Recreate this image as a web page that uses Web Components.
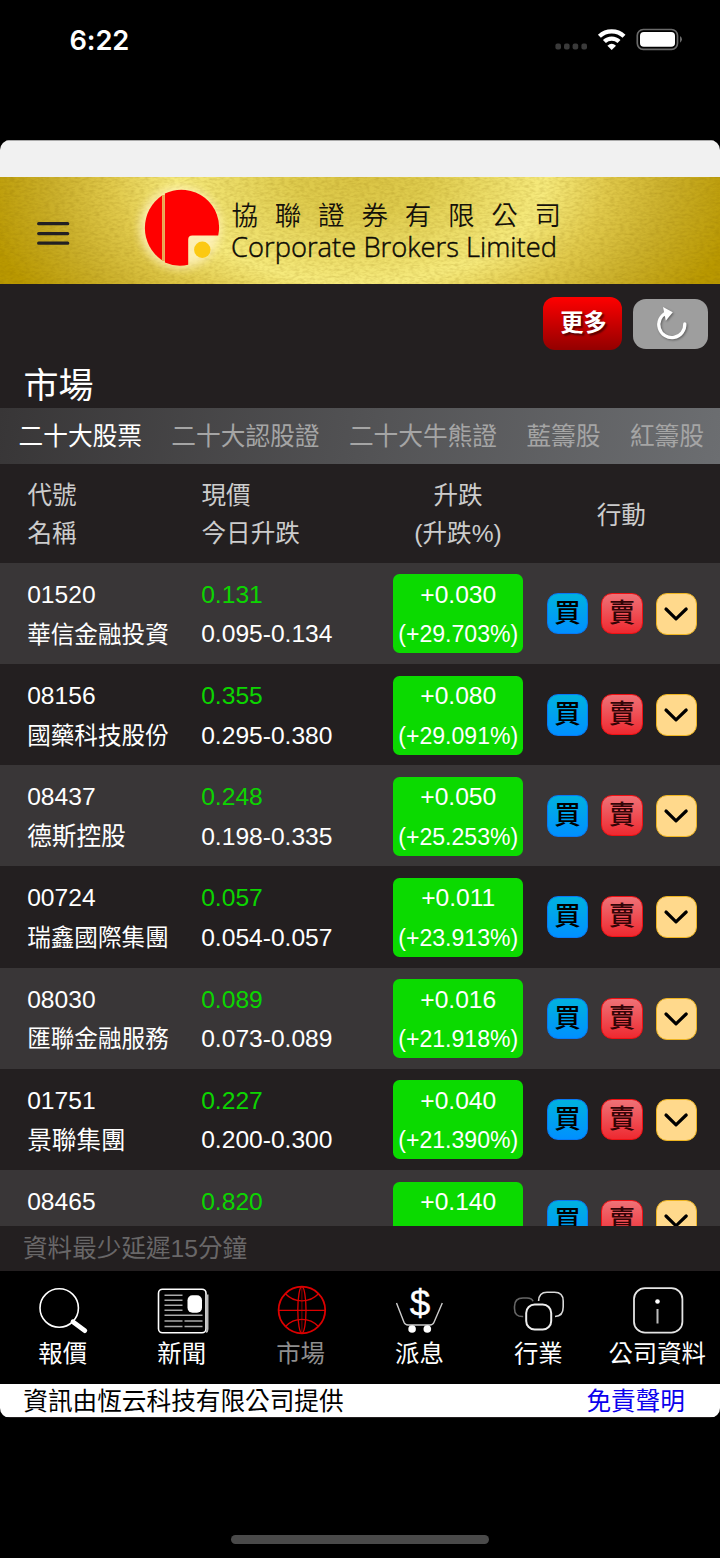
<!DOCTYPE html>
<html lang="zh-Hant">
<head>
<meta charset="utf-8">
<title>市場</title>
<style>
html,body{margin:0;background:#000}
body{width:720px;height:1558px;overflow:hidden;font-family:"Liberation Sans","Noto Sans CJK TC",sans-serif;color:#fff}
</style>
</head>
<body>
<market-app></market-app>
<script>
const define=(name,html)=>customElements.define(name,class extends HTMLElement{
  constructor(){
    super();
    const t=document.createElement('template');
    t.innerHTML=html;
    this.attachShadow({mode:'open'}).append(t.content.cloneNode(true));
  }
});

define('status-bar',`<style>
:host{display:flex;height:140px;box-sizing:border-box;padding:24px 37px 0 69.5px;justify-content:space-between;align-items:flex-start}
.time{font:600 27.3px/34px Inter,sans-serif;letter-spacing:-.1px}
svg{display:block}
</style><span class="time">6:22</span>
<svg width="130" height="32" viewBox="553 24 130 32">
<g fill="#3a3a3a"><rect x="555.4" y="43.4" width="5.6" height="6" rx="2"/><rect x="564" y="43.4" width="5.6" height="6" rx="2"/><rect x="572.6" y="43.4" width="5.6" height="6" rx="2"/><rect x="581.4" y="43.4" width="5.6" height="6" rx="2"/></g>
<g fill="none" stroke="#fff" stroke-width="4.3"><path d="M599.4 36.2A18 18 0 0 1 624 36.2"/><path d="M604.4 41.5A10.6 10.6 0 0 1 619 41.5"/></g>
<path d="M611.7 49.9L607.4 45.7Q611.7 41.8 616 45.7Z" fill="#fff"/>
<rect x="637.3" y="29.5" width="40.2" height="19.8" rx="6" fill="none" stroke="#6a6a6a" stroke-width="1.7"/>
<rect x="640" y="32.1" width="35" height="14.7" rx="3.8" fill="#fff"/>
<path d="M680 36Q682 37.5 682 39.3Q682 41.2 680 42.8Z" fill="#6a6a6a"/>
</svg>`);

define('brand-header',`<style>
:host{display:block;height:107px;background:radial-gradient(ellipse 385px 222px at 50% 0,#dac444 0,#dfcc4e 18%,#f6ea7c 48%,#e1ca4c 64%,#cbb02b 80%,#b99800 100%)}
svg{display:block}
</style>
<svg width="720" height="107" viewBox="0 177 720 107">
<defs>
<filter id="grain" x="0" y="0" width="100%" height="100%" color-interpolation-filters="sRGB"><feTurbulence type="fractalNoise" baseFrequency=".2 .42" numOctaves="2" seed="4"/><feColorMatrix values="0 0 0 0 .5  0 0 0 0 .38  0 0 0 0 0  1.3 0 0 0 -.5"/></filter>
<filter id="glow" x="-30%" y="-30%" width="160%" height="160%"><feGaussianBlur stdDeviation="5"/></filter>
</defs>
<rect y="177" width="720" height="107" filter="url(#grain)" opacity=".3"/>
<path d="M38.7 223.7H67.7M38.7 233.6H67.7M38.7 243.2H67.7" stroke="#222022" stroke-width="3.3" stroke-linecap="round"/>
<circle cx="180" cy="228" r="40.5" fill="#fff3c0" opacity=".85" filter="url(#glow)"/>
<g transform="translate(-1 0)"><path d="M165.9 193.6A37.6 37.6 0 0 1 219.2 235.5H193.3Q189.2 235.5 189.2 239.6V264.8A37.6 37.6 0 0 1 165.9 262.5Z" fill="#f00"/>
<path d="M163 195.5V260.3A39.2 39.2 0 0 1 163 195.5Z" fill="#f00"/>
<rect x="163.1" y="195" width="2.7" height="66" fill="#e9a44f"/>
<circle cx="203.3" cy="249.7" r="8.2" fill="#fcc912"/></g>
<text x="231.5" y="225" font-family="Noto Sans CJK TC,sans-serif" font-weight="350" font-size="26.5" letter-spacing="16.8" fill="#15110a">協聯證券有限公司</text>
<text x="231" y="257" font-family="Open Sans,sans-serif" font-weight="300" font-size="27.3" textLength="326" fill="#0d0b05" stroke="#0d0b05" stroke-width=".45">Corporate Brokers Limited</text>
</svg>`);

define('tool-bar',`<style>
:host{display:flex;flex-direction:column;height:124px}
.acts{display:flex;justify-content:flex-end;gap:11px;padding:13px 12px 0 0;height:53px}
.more{width:79px;height:53px;border-radius:12px;background:linear-gradient(#f00,#930000);font:700 23.3px/48px "Noto Sans CJK TC",sans-serif;text-align:center;text-indent:2px;text-shadow:2px 2px 2px #0008}
.re{width:75px;height:50px;margin-top:1.5px;border-radius:13px;background:#9e9e9e}
h1{margin:9px 0 0 23.5px;font:400 35px/48px "Noto Sans CJK TC",sans-serif}
</style><div class="acts"><div class="more">更多</div><div class="re"><svg width="75" height="50" viewBox="633 298.5 75 50"><g style="filter:drop-shadow(1.5px 1.5px 1px #0006)"><path d="M666.6 312.2A13 13 0 1 0 684.8 323.4" fill="none" stroke="#fff" stroke-width="3.3" stroke-linecap="round"/><path d="M663 306.6L672.8 311.8L665.8 320.2Z" fill="#fff"/></g></svg></div></div>
<h1>市場</h1>`);

define('tab-strip',`<style>
:host{display:flex;height:56px;padding-left:18.5px;gap:29.4px;background:linear-gradient(100deg,#383637,#6c6e71);white-space:nowrap;color:#a5a5a5;font-size:24.7px;line-height:58.5px;box-sizing:border-box;overflow:hidden}
.on{color:#fff}
</style><span class="on">二十大股票</span><span>二十大認股證</span><span>二十大牛熊證</span><span>藍籌股</span><span>紅籌股</span>`);

define('column-heads',`<style>
:host{display:grid;grid-template-columns:174px 192px 129px 1fr;height:98.8px;box-sizing:border-box;padding:12.6px 0 0 27.5px;color:#ccc;font-size:24.6px;line-height:38.5px}
.c{text-align:center}.a{line-height:77px}
</style><div>代號<br>名稱</div><div>現價<br>今日升跌</div><div class="c">升跌<br>(升跌%)</div><div class="c a">行動</div>`);

define('trade-actions',`<style>
:host{display:flex;gap:13px;padding-top:29.9px}
b{display:block;box-sizing:border-box;width:41.6px;height:41.6px;border-radius:11px;font:500 26.5px/34.6px "Noto Sans CJK TC",sans-serif;text-align:center;color:#000}
.buy{background:linear-gradient(#00b2de,#0090ff);border:1.5px solid #0878f4}
.sell{height:41px;background:linear-gradient(#ef7277,#ee2930);border:1.5px solid #ee1013;color:#320406}
.down{height:42px;background:#ffd98c;border:1.5px solid #eeb421}
svg{display:block}
</style><b class="buy">買</b><b class="sell">賣</b><b class="down"><svg width="38" height="38"><path d="M9 15L19 24.8L29.2 15" fill="none" stroke="#000" stroke-width="3.2" stroke-linecap="round" stroke-linejoin="round"/></svg></b>`);

define('stock-row',`<style>
:host{display:grid;grid-template-columns:174px 192.3px 129.5px auto;height:101.22px;box-sizing:border-box;padding-left:27.2px;font-size:24.6px;line-height:39.6px}
:host(:nth-child(odd)){background:#393637}
.t{padding-top:12px}
.p{color:#0cd500}
.n{font-size:23.6px;padding-top:1.2px}
:host([short]) .n{font-size:24.6px;padding-top:.4px}
.chg{margin-top:11.6px;height:79px;border-radius:6.5px;background:#0bda00;text-align:center;box-sizing:border-box;padding-top:.4px;white-space:nowrap}
.chg span{font-size:23.1px}
trade-actions{margin-left:23.6px}
</style><div class="t"><slot name="code"></slot><div class="n"><slot name="name"></slot></div></div>
<div class="t"><div class="p"><slot name="price"></slot></div><slot name="range"></slot></div>
<div class="chg"><slot name="change"></slot><br><span><slot name="percent"></slot></span></div><trade-actions></trade-actions>`);

const stocks=[
['01520','華信金融投資','0.131','0.095-0.134','+0.030','(+29.703%)'],
['08156','國藥科技股份','0.355','0.295-0.380','+0.080','(+29.091%)'],
['08437','德斯控股','0.248','0.198-0.335','+0.050','(+25.253%)'],
['00724','瑞鑫國際集團','0.057','0.054-0.057','+0.011','(+23.913%)'],
['08030','匯聯金融服務','0.089','0.073-0.089','+0.016','(+21.918%)'],
['01751','景聯集團','0.227','0.200-0.300','+0.040','(+21.390%)'],
['08465','','0.820','','+0.140','']];
const keys=['code','name','price','range','change','percent'];
define('stock-list',`<style>:host{display:block;height:663.2px;overflow:hidden}</style><div>`+
stocks.map(s=>`<stock-row${s[1].length<6?' short':''}>${s.map((v,i)=>v?`<span slot="${keys[i]}">${v}</span>`:'').join('')}</stock-row>`).join('')+'</div>');

define('nav-item',`<style>
:host{display:flex;flex-direction:column;align-items:center;font-size:24.4px;line-height:32px;white-space:nowrap}
:host([on]) .l{color:#8e8e8e}
</style><slot name="icon"></slot><span class="l"><slot></slot></span>`);

define('bottom-nav',`<style>
:host{display:grid;grid-template-columns:repeat(6,118.9px);height:112.5px;background:#000;padding:9px 0 0 3.3px;box-sizing:border-box}
svg{display:block;fill:none;stroke:#fff;stroke-width:1.6}
</style>
<nav-item><svg slot="icon" width="60" height="58" viewBox="33 1280 60 58"><circle cx="59.2" cy="1308" r="19.2"/><path d="M73 1321.8L84.8 1330.6" stroke-width="4.8" stroke-linecap="round"/></svg>報價</nav-item>
<nav-item><svg slot="icon" width="60" height="58" viewBox="151.5 1280 60 58"><rect x="158" y="1289.2" width="47.5" height="43.6" rx="4"/><path d="M207 1294.5V1329Q207 1331.5 205.5 1332" stroke="#bbb" stroke-width="2"/><path d="M164 1295.3H182M164 1300.3H182M164 1305.3H182M164 1310.3H182M164 1315.3H202M164 1321H182M184 1321H202M164 1326.5H182M184 1326.5H202" stroke="#aaa"/><rect x="187" y="1295.2" width="14.5" height="17.6" rx="5" fill="#fff" stroke="none"/></svg>新聞</nav-item>
<nav-item on><svg slot="icon" width="60" height="58" viewBox="270.5 1280 60 58" style="stroke:#dc0000;stroke-width:1.3"><circle cx="301.4" cy="1310" r="23.3" stroke-width="1.8"/><ellipse cx="301.4" cy="1310" rx="4.1" ry="23.3"/><path d="M301.4 1287V1333" stroke-width=".6"/><path d="M278 1310.3H325M285 1293.7Q291.5 1300.8 301.4 1300.8T318 1293.7M285 1326.5Q291.5 1319.3 301.4 1319.3T318 1326.5"/></svg>市場</nav-item>
<nav-item><svg slot="icon" width="60" height="58" viewBox="389.5 1280 60 58"><path d="M397 1303L404.6 1322.6Q405.6 1325 408.5 1325H430.5Q433.4 1325 434.4 1322.6L442.8 1303" stroke="#ccc" stroke-width="1.4"/><circle cx="412.6" cy="1329" r="3.8" fill="#fff" stroke="none"/><circle cx="427.8" cy="1329" r="3.8" fill="#fff" stroke="none"/><text x="420.6" y="1316.3" text-anchor="middle" font-size="37" fill="#fff" stroke="#fff" stroke-width=".3">$</text></svg>派息</nav-item>
<nav-item><svg slot="icon" width="60" height="58" viewBox="508 1280 60 58"><path d="M523.2 1316.5Q514.5 1317 514.5 1308.5V1306.5Q514.5 1298 523 1298H527Q532 1298 533 1301.3" stroke="#666"/><path d="M538.6 1301Q538.8 1292.2 547 1292.2H554.5Q563.2 1292.2 563.2 1301V1307Q563.2 1316.4 555 1316.5" stroke="#d8d8d8"/><rect x="526.2" y="1304.5" width="25" height="25" rx="8.5" stroke="#eee" stroke-width="2"/></svg>行業</nav-item>
<nav-item><svg slot="icon" width="60" height="58" viewBox="627.3 1280 60 58"><rect x="634.3" y="1288.1" width="48.4" height="44.6" rx="11" stroke="#e4e4e4" stroke-width="1.8"/><circle cx="657.8" cy="1301.5" r="2.3" fill="#fff" stroke="none"/><path d="M657.8 1309V1323.5" stroke="#bbb" stroke-width="2"/></svg>公司資料</nav-item>`);

define('market-app',`<style>
:host{display:block;width:720px;height:1558px;background:#000}
main{height:1277.5px;border-radius:10px;overflow:hidden;background:#231f20;display:flex;flex-direction:column}
main>*{flex:none}
.top{height:37px;background:#f1f1f1;box-sizing:border-box;border-top:1px solid #aaa}
.delay{height:45.5px;padding-left:23px;color:#696768;font-size:24.6px;line-height:46.5px;box-sizing:border-box}
footer{display:flex;justify-content:space-between;height:33.5px;padding:0 35px 0 23.3px;background:#fff;color:#000;font-size:24.65px;line-height:36.5px}
footer a{color:#0b00ec}
.home{height:8.6px;width:257.5px;border-radius:5px;background:#4a4a4a;margin:117.8px auto 0}
</style><status-bar></status-bar>
<main><div class="top"></div><brand-header></brand-header><tool-bar></tool-bar><tab-strip></tab-strip><column-heads></column-heads><stock-list></stock-list><div class="delay">資料最少延遲15分鐘</div><bottom-nav></bottom-nav><footer><span>資訊由恆云科技有限公司提供</span><a>免責聲明</a></footer></main><div class="home"></div>`);
</script>
</body>
</html>
